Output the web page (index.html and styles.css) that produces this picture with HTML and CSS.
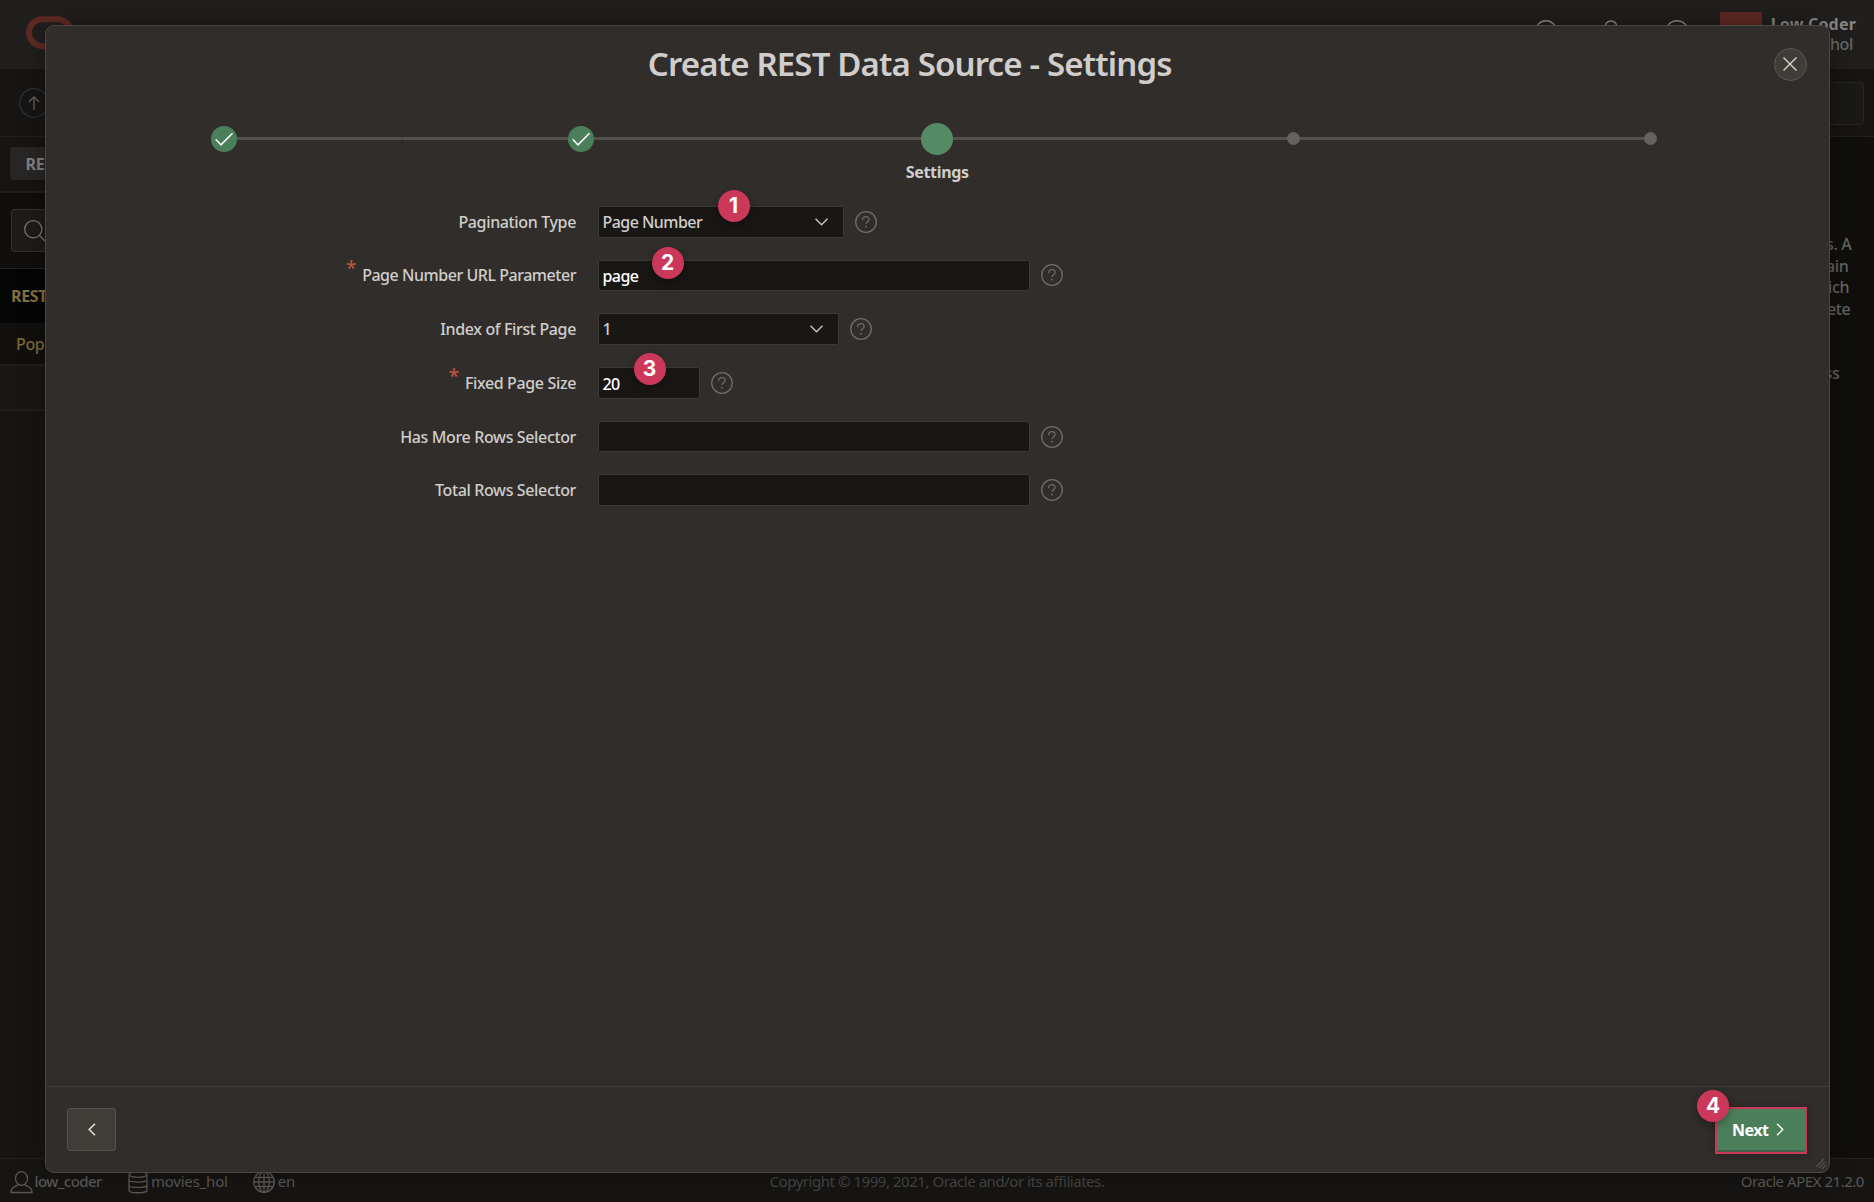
FILE: index.html
```
<!DOCTYPE html>
<html lang="en">
<head>
<meta charset="utf-8">
<title>Create REST Data Source - Settings</title>
<link rel="stylesheet" href="styles.css">
</head>
<body>
<svg class="sprite" width="0" height="0">
  <symbol id="help" viewBox="0 0 22 22"><circle cx="11" cy="11" r="10.3" fill="none" stroke="#706c68" stroke-width="1.3"/><path d="M7.7 9.200V8.600a3.200 3 0 0 1 6.400 0c0 2.300-3.100 2.200-3.100 4.500" fill="none" stroke="#706c68" stroke-width="1.200"/><circle cx="10.900" cy="15.700" r=".9" fill="#706c68"/></symbol>
  <symbol id="down" viewBox="0 0 12 7"><path d="M.5.500 6 6 11.500.500" fill="none" stroke="#c9c7c5" stroke-width="1.300"/></symbol>
  <symbol id="check" viewBox="0 0 26 26"><path d="M4.700 13.300 10 18.900 21.500 7.300" fill="none" stroke="#fff" stroke-width="1.500"/></symbol>
</svg>

<div class="app">
  <header class="topbar">
    <svg class="logo" width="52" height="34"><rect x="3" y="3.200" width="42" height="27" rx="13.500" fill="none" stroke="#5e2a22" stroke-width="6"/></svg>
    <div class="tools">
      <svg width="22" height="22"><circle cx="11" cy="11" r="10.300"/></svg>
      <svg width="14" height="22"><path d="M1 22V7a6 6 0 0 1 12 0v15"/></svg>
      <svg width="24" height="24"><circle cx="12" cy="12" r="11.300"/></svg>
    </div>
    <div class="avatar"></div>
    <div class="account"><b>Low Coder</b><span>_hol</span></div>
  </header>
  <div class="toolbar">
    <svg class="up" width="30" height="30"><circle cx="15" cy="15" r="14.300" fill="none" stroke="#27343a" stroke-width="1.300"/><path d="M15 22V9M9.800 14 15 8.900 20.200 14" fill="none" stroke="#605e5b" stroke-width="1.400"/></svg>
    <div class="search-right"></div>
  </div>
  <div class="main">
    <aside>
      <div class="tabs"><div class="tab">REST</div></div>
      <div class="find"><div class="find-box"><svg width="24" height="24"><circle cx="9.300" cy="9.300" r="8.600" fill="none" stroke="#777572" stroke-width="1.300"/><path d="M15.500 15.500 23 23" stroke="#777572" stroke-width="1.300"/></svg></div></div>
      <div class="group">REST</div>
      <div class="entry">Pop</div>
      <div class="entry blank"></div>
    </aside>
    <div class="about"><p>s. A</p><p>ain</p><p class="in2">ich</p><p class="in1">ete</p><p class="later">ss</p></div>
  </div>
  <footer class="status">
    <div class="status-left">
      <svg width="23" height="23"><ellipse cx="11.500" cy="7.500" rx="6" ry="6.800"/><path d="M8.300 13.300C7.500 16 1 14.500 1 21.500H22C22 14.500 15.500 16 14.700 13.300"/></svg><span class="user">low_coder</span>
      <svg class="db" width="20" height="23"><ellipse cx="10" cy="3.500" rx="9" ry="2.800"/><path d="M1 3.500V19.500c0 3 18 3 18 0V3.500M1 8.800c0 3 18 3 18 0M1 14.200c0 3 18 3 18 0"/></svg><span>movies_hol</span>
      <svg class="globe" width="22" height="22"><circle cx="11" cy="11" r="10.300"/><ellipse cx="11" cy="11" rx="5.300" ry="10.300"/><path d="M2.200 6.500H19.800M2.200 15.500H19.800M11 1V21M.7 11H21.300"/></svg><span>en</span>
    </div>
    <div class="copy">Copyright © 1999, 2021, Oracle and/or its affiliates.</div>
    <div class="version">Oracle APEX 21.2.0</div>
  </footer>
</div>

<div class="dialog">
  <div class="head">
    <h1>Create REST Data Source - Settings</h1>
    <button class="close"><svg width="14" height="14"><path d="M.5.500 13.500 13.500M13.500.500.500 13.500" stroke="#d8d6d3" stroke-width="1.400"/></svg></button>
  </div>
  <ol class="steps">
    <li><i class="dot done"><svg width="26" height="26"><use href="#check"/></svg></i></li>
    <li><i class="dot done"><svg width="26" height="26"><use href="#check"/></svg></i></li>
    <li><i class="dot current"></i><b>Settings</b></li>
    <li><i class="dot"></i></li>
    <li><i class="dot"></i></li>
  </ol>
  <div class="form">
    <div class="row"><label><span>Pagination Type</span></label><div class="field w-type"><span>Page Number</span><svg class="chev" width="13" height="8"><use href="#down"/></svg><em class="badge b1">1</em></div><svg class="help" width="22" height="22"><use href="#help"/></svg></div>
    <div class="row"><label><sup>*</sup><span class="tight">Page Number URL Parameter</span></label><div class="field w-text edit"><span>page</span><em class="badge b2">2</em></div><svg class="help" width="22" height="22"><use href="#help"/></svg></div>
    <div class="row"><label><span>Index of First Page</span></label><div class="field w-index"><span>1</span><svg class="chev" width="13" height="8"><use href="#down"/></svg></div><svg class="help" width="22" height="22"><use href="#help"/></svg></div>
    <div class="row"><label><sup>*</sup><span>Fixed Page Size</span></label><div class="field w-num edit"><span>20</span><em class="badge b3">3</em></div><svg class="help" width="22" height="22"><use href="#help"/></svg></div>
    <div class="row"><label><span>Has More Rows Selector</span></label><div class="field w-text"></div><svg class="help" width="22" height="22"><use href="#help"/></svg></div>
    <div class="row"><label><span>Total Rows Selector</span></label><div class="field w-text"></div><svg class="help" width="22" height="22"><use href="#help"/></svg></div>
  </div>
  <div class="foot">
    <button class="back"><svg width="8" height="13"><path d="M7 .8 1.200 6.500 7 12.200" fill="none" stroke="#e0dedb" stroke-width="1.600"/></svg></button>
    <div class="next"><button><b>Next</b><svg width="8" height="13"><path d="M1 .8 6.800 6.500 1 12.200" fill="none" stroke="#fff" stroke-width="1.300"/></svg></button><em class="badge b4">4</em></div>
  </div>
  <svg class="grip" width="12" height="12"><path d="M1 9 9 1M4 10 10 4M7 11 11 7" stroke="#55524e" stroke-width="1.200"/></svg>
</div>
</body>
</html>
```
FILE: styles.css
```
* { box-sizing: border-box; }
body {
  margin: 0;
  width: 1874px;
  height: 1202px;
  overflow: hidden;
  position: relative;
  background: #100f0d;
  font: 500 16px/20px "Noto Sans", sans-serif;
  letter-spacing: -.36px;
  color: #d0cecc;
}
.sprite { position: absolute; }
svg { display: block; flex: none; }
h1, p, ol { margin: 0; padding: 0; }
button { font: inherit; letter-spacing: inherit; color: inherit; padding: 0; }
span, b { white-space: nowrap; }

/* Dimmed application behind the dialog */
.app { display: flex; flex-direction: column; height: 1202px; }
.topbar { display: flex; align-items: flex-start; height: 69px; background: #201f1d; flex: none; }
.logo { margin: 16px 0 0 26px; }
.tools { display: flex; gap: 47px; margin: 20px 31px 0 auto; }
.tools svg { fill: none; stroke: #8c8a87; stroke-width: 1.4; }
.avatar { width: 42px; height: 30px; margin: 12px 9px 0 0; border-radius: 2px; background: #5e2a22; }
.account { display: flex; flex-direction: column; align-items: flex-end; width: 86px; margin: 14px 17px 0 0; color: #6a6865; }
.account b { color: #8a8886; font-weight: 700; letter-spacing: .2px; padding-right: 1px; }
.account span { padding-right: 4px; }
.toolbar { display: flex; justify-content: space-between; height: 68px; flex: none; background: #161513; border-bottom: 1px solid #21201e; }
.up { margin: 19px 0 0 19px; }
.search-right { width: 100px; height: 43px; margin: 13px 10px 0 0; background: #1a1917; border: 1px solid #262523; border-radius: 3px; }
.main { display: flex; justify-content: space-between; flex: 1; }
aside { width: 60px; background: #161513; }
.tabs { height: 56px; padding: 10px 0 0 10px; border-bottom: 2px solid #201f1d; }
.tab { height: 33px; padding: 7px 15.500px; border-radius: 3px; background: #282725; color: #848281; font-weight: 700; }
.find { height: 76px; padding: 16px 0 0 11px; background: #100f0d; border-bottom: 1px solid #252422; }
.find-box { height: 43px; padding: 10px 0 0 12px; border: 1px solid #32312f; border-radius: 3px; background: #1d1c1a; }
.group { height: 54px; padding: 17px 11px; background: #050505; color: #86703f; font-weight: 700; }
.entry { height: 43px; padding: 11px 16px; background: #11100f; color: #7f6a38; border-bottom: 2px solid #1f1e1c; }
.entry.blank { height: 45px; background: #181715; }
.about { width: 48px; padding-top: 97px; line-height: 21.600px; color: #666461; }
.in1 { padding-left: 1px; }
.in2 { padding-left: 2px; }
.later { padding-top: 43px; margin-left: -1.500px; }
.status { display: grid; grid-template-columns: 1fr auto 1fr; align-items: start; height: 44px; flex: none; background: #161513; border-top: 1px solid #232220; padding: 12px 10px 0; color: #5b5957; font-size: 15px; font-weight: 400; letter-spacing: -.46px; }
.status-left { display: flex; margin-left: -.5px; }
.status-left svg { fill: none; stroke: #5b5957; stroke-width: 1.300; }
.status-left span { margin-left: 3px; letter-spacing: -.2px; }
.status-left .user { margin-left: 2px; font-weight: 500; letter-spacing: -.55px; }
.status-left .db { margin-left: 26px; }
.status-left .globe { margin-left: 25px; }
.copy { color: #474543; }
.version { text-align: right; }

/* Wizard dialog */
.dialog {
  position: absolute;
  left: 45px;
  top: 25px;
  width: 1784.500px;
  height: 1148px;
  display: flex;
  flex-direction: column;
  background: #312d2a;
  border: 1px solid #4a4743;
  border-radius: 9px;
  box-shadow: 0 0 24px rgba(0, 0, 0, .35);
}
.head { display: flex; align-items: center; height: 76px; padding-right: 22px; flex: none; }
h1 { flex: 1; text-align: center; font-size: 33px; line-height: 40px; font-weight: 600; letter-spacing: -.85px; }
.close { display: grid; place-items: center; width: 33px; height: 33px; border-radius: 50%; border: 1px solid #5b5854; background: #403c38; }
.steps { display: grid; grid-template-columns: repeat(5, 1fr); list-style: none; height: 104px; padding-top: 20px; flex: none; }
.steps li {
  display: flex;
  flex-direction: column;
  align-items: center;
  background: linear-gradient(#55514d, #55514d) 0 15px / 100% 3px no-repeat;
}
.steps li:first-child { background-size: 50% 3px; background-position: 100% 15px; }
.steps li:last-child { background-size: 50% 3px; }
.dot { width: 13px; height: 13px; margin: 10px 0; border-radius: 50%; background: #66615d; }
.dot.done { width: 26px; height: 26px; margin: 3.500px 0; background: #4b7f59; }
.dot.current { width: 32px; height: 32px; margin: .5px 0 7px; background: #548b64; }
.steps b { font-weight: 700; letter-spacing: -.35px; }

.form { flex: 1; }
.row { display: flex; align-items: center; height: 31.500px; margin-bottom: 22.200px; }
label { display: flex; justify-content: flex-end; width: 530px; margin-right: 22px; }
.tight { letter-spacing: -.46px; }
sup { align-self: flex-start; font-size: 19px; line-height: 20px; color: #b9533f; margin: -7px 6px 7px 0; }
.field {
  position: relative;
  display: flex;
  align-items: center;
  height: 31.500px;
  padding: 0 15px 0 3.500px;
  background: #191715;
  border: 1px solid #3b3936;
  border-radius: 2px;
  letter-spacing: -.550px;
}
.edit { color: #fff; padding-top: 2px; }
.w-type { width: 246px; }
.w-text { width: 432px; }
.w-index { width: 241px; }
.w-num { width: 102px; }
.chev { margin-left: auto; }
.help { margin-left: 10.500px; }

/* Numbered callouts sit over the controls they describe */
.badge {
  position: absolute;
  width: 32px;
  height: 32px;
  border-radius: 50%;
  background: #cc385a;
  color: #fff;
  font: 700 21px/32px "Inter", sans-serif;
  letter-spacing: 0;
  text-align: center;
  box-shadow: 0 3px 8px rgba(0, 0, 0, .3);
}
.b1 { left: 118.500px; top: -17.500px; }
.b2 { left: 52.500px; top: -13.500px; }
.b3 { left: 34.500px; top: -15px; }
.b4 { left: -17.500px; top: -16.500px; }

.foot { display: flex; align-items: flex-start; justify-content: space-between; height: 86px; flex: none; padding: 20.500px 22px 0 21px; border-top: 1px solid #3f3b38; }
.back { display: grid; place-items: center; width: 49px; height: 43px; background: #403c38; border: 1px solid #56524e; border-radius: 3px; }
.next { position: relative; margin-top: -1px; }
.next button { display: flex; align-items: center; gap: 8px; width: 92px; height: 47px; padding: 0 0 1px 15.500px; border: 2px solid #cc385a; background: #4b7f59; box-shadow: inset 0 -2px #40604a, 0 1px 8px rgba(0, 0, 0, .3); color: #fff; }
.next b { letter-spacing: -.5px; }
.grip { position: absolute; right: 2px; bottom: 2px; }
```
